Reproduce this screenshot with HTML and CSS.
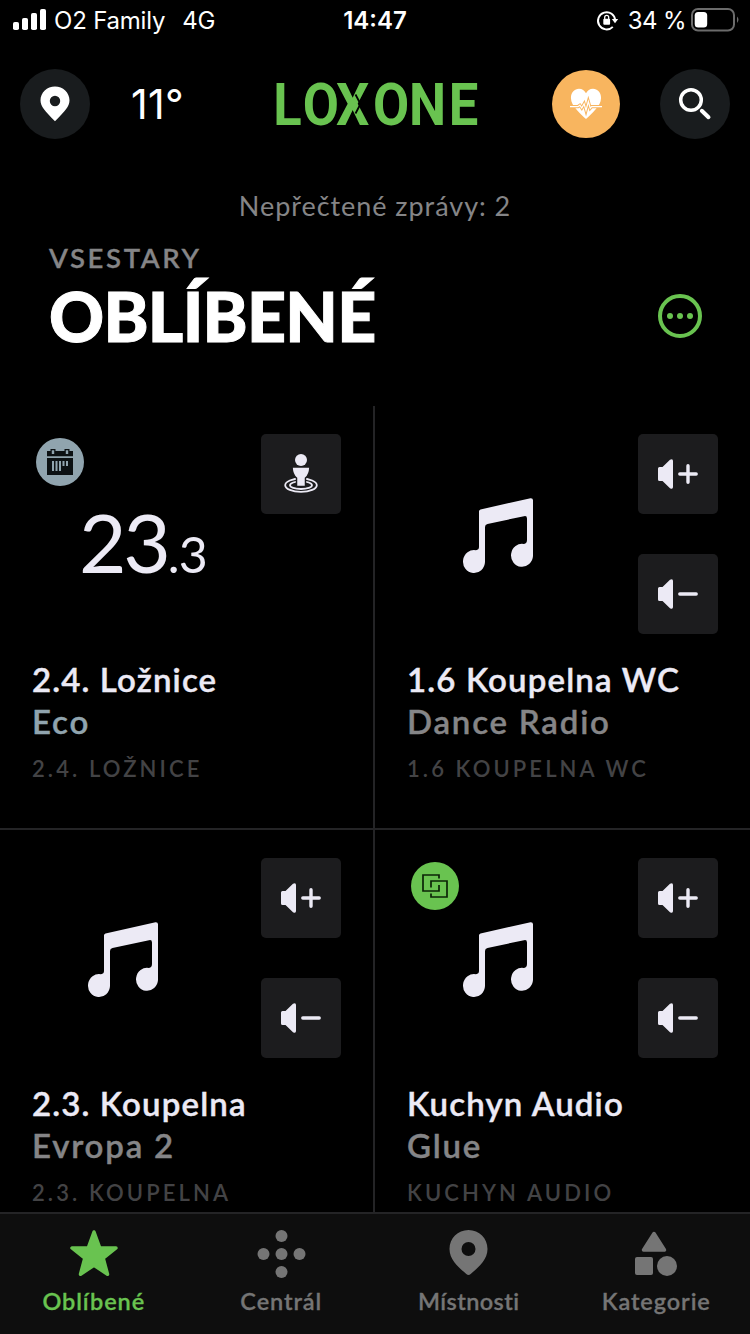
FILE: index.html
```html
<!DOCTYPE html>
<html lang="cs">
<head>
<meta charset="utf-8">
<title>Loxone</title>
<link rel="stylesheet" href="styles.css">
</head>
<body>
<svg width="0" height="0" class="defs" aria-hidden="true">
  <defs>
    <symbol id="note" viewBox="0 0 70 76">
      <path d="M16 13.5Q16 12 17.500 11.500L67.500 .200Q70 0 70 2.200V58A11 11.500 0 1 1 61 46Q64 45.500 64 42V20.500Q64 17.500 61 18.200L24.500 26Q22 26.700 22 29V64A11 11.500 0 1 1 13 52.200Q16 51.800 16 49Z" fill="#eceaf5"/>
    </symbol>
    <symbol id="vol-up" viewBox="0 0 40 30">
      <path d="M0 9.500Q0 8 1.500 8H4.500L12 .700Q15 -.800 15 2V28Q15 30.800 12 29.300L4.500 22H1.500Q0 22 0 20.500Z" fill="#eceaf5"/>
      <path d="M21.800 15H38.200M30 6.800V23.200" stroke="#eceaf5" stroke-width="3.400" stroke-linecap="round"/>
    </symbol>
    <symbol id="vol-down" viewBox="0 0 40 30">
      <path d="M0 9.500Q0 8 1.500 8H4.500L12 .700Q15 -.800 15 2V28Q15 30.800 12 29.300L4.500 22H1.500Q0 22 0 20.500Z" fill="#eceaf5"/>
      <path d="M21.800 15H38.200" stroke="#eceaf5" stroke-width="3.400" stroke-linecap="round"/>
    </symbol>
  </defs>
</svg>
<div class="screen">
  <div class="status">
    <div class="status-left">
      <svg class="signal" width="34" height="22" viewBox="0 0 34 22" fill="#fff"><rect x="0" y="13" width="6" height="8" rx="1.800"/><rect x="9" y="9" width="6" height="12" rx="1.800"/><rect x="18" y="4" width="6" height="17" rx="1.800"/><rect x="27" y="0" width="6" height="21" rx="1.800"/></svg>
      <span class="carrier">O2 Family</span>
      <span class="network">4G</span>
    </div>
    <span class="clock">14:47</span>
    <div class="status-right">
      <svg width="22" height="22" viewBox="0 0 22 22"><path d="M15.800 17.300A8.600 8.600 0 1 1 18.200 11" transform="translate(0 -.5)" fill="none" stroke="#fff" stroke-width="1.900"/><path d="M14.800 9H21.200L18 13.200Z" fill="#fff"/><rect x="6.300" y="8.700" width="6.800" height="6" rx="1" fill="#fff"/><path d="M7.700 9V7.400a2 2 0 0 1 4 0V9" fill="none" stroke="#fff" stroke-width="1.300"/></svg>
      <span class="percent">34 %</span>
      <svg class="battery" width="48" height="24" viewBox="0 0 48 24"><rect x="1" y="1" width="42" height="21.500" rx="6" fill="none" stroke="#6b6b6b" stroke-width="2"/><rect x="3.700" y="4" width="12.500" height="15.500" rx="3.500" fill="#fff"/><path d="M46 8.500Q49 11.700 46 15Z" fill="#6b6b6b"/></svg>
    </div>
  </div>

  <header class="topbar">
    <div class="round"><svg width="30" height="36" viewBox="0 0 30 36"><path fill-rule="evenodd" d="M15 .500C23 .500 29.500 6.600 29.500 14.300C29.500 20.500 25 25.300 15 35.300C5 25.300 .500 20.500 .500 14.300C.500 6.600 7 .500 15 .500ZM15 9.800a5.200 5.200 0 1 0 0 10.400a5.200 5.200 0 1 0 0 -10.400Z" fill="#fff"/></svg></div>
    <span class="temp">11°</span>
    <svg class="logo" width="202" height="48" viewBox="0 0 202 48">
      <text transform="scale(.89 1)" y="45" x="-3 30 67.500 109 149.500 194" class="wordmark">LOXONE</text>
      <path d="M79.500 14.500L84.500 24L79.500 33.500" fill="none" stroke="#000" stroke-width="1.800"/>
    </svg>
    <div class="health"><svg width="32" height="32" viewBox="0 0 34 34"><path d="M17 33C12 27.500 1 19.500 1 10.500C1 4.500 5 .800 9.500 .800C13 .800 15.500 2.800 17 5.500C18.500 2.800 21 .800 24.500 .800C29 .800 33 4.500 33 10.500C33 19.500 22 27.500 17 33Z" fill="#fff"/><path d="M0 19.800H8.500L10.500 18.300L12.500 21.300L15 16.800L17 23.800L19.500 14.500L21.500 21.500L23 19.800H34" fill="none" stroke="#f8b55f" stroke-width="3.400"/><path d="M0 19.800H8.500L10.500 18.300L12.500 21.300L15 16.800L17 23.800L19.500 14.500L21.500 21.500L23 19.800H34" fill="none" stroke="#fff" stroke-width="1.300"/></svg></div>
    <div class="round"><svg width="34" height="34" viewBox="0 0 34 34" fill="none" stroke="#fff" stroke-linecap="round"><circle cx="13" cy="13" r="10.300" stroke-width="3.500"/><path d="M23.800 23.800L30.500 30.200" stroke-width="4"/></svg></div>
  </header>

  <p class="unread">Nepřečtené zprávy: 2</p>

  <section class="heading">
    <div>
      <p class="place">VSESTARY</p>
      <h1 class="title">OBLÍBENÉ</h1>
    </div>
    <svg class="more" width="44" height="44" viewBox="0 0 44 44"><circle cx="22" cy="22" r="20" fill="none" stroke="#69c350" stroke-width="4"/><g fill="#69c350"><circle cx="12" cy="22" r="3"/><circle cx="22" cy="22" r="3"/><circle cx="32" cy="22" r="3"/></g></svg>
  </section>

  <main class="grid">
    <article class="tile">
      <div class="tile-top">
        <div class="state">
          <div class="badge eco"><svg width="28" height="28" viewBox="0 0 28 28"><path d="M1 3H4.500V1H9.500V3H18.500V1H23.500V3H27V8.300H1ZM1 10H27V27H1Z" fill="#0c1113"/><path d="M5.800 2.300H8.200V6H5.800ZM19.800 2.300H22.200V6H19.800Z" fill="#90a4ae"/><path d="M7 13V23M10.500 13V23M14 13V23M17.500 13V18M21 13V18" stroke="#90a4ae" stroke-width="2"/></svg></div>
          <div class="reading">23<span class="fraction">.3</span></div>
        </div>
        <div class="actions">
          <div class="button"><svg width="34" height="40" viewBox="0 0 34 40"><g fill="none" stroke="#eceaf5" stroke-width="1.800"><ellipse cx="17" cy="31.200" rx="15.800" ry="6.700"/><ellipse cx="17" cy="31.200" rx="11" ry="3.800"/></g><path d="M8 13H26Q25.500 21 21.500 24V32.500H12.500V24Q8.500 21 8 13Z" fill="#eceaf5" stroke="#1c1c1e" stroke-width="1.500"/><circle cx="17" cy="6" r="6" fill="#eceaf5"/></svg></div>
        </div>
      </div>
      <h2 class="name">2.4. Ložnice</h2>
      <p class="mode eco-text">Eco</p>
      <p class="room">2.4. LOŽNICE</p>
    </article>

    <article class="tile">
      <div class="tile-top">
        <div class="state"><svg class="note" width="70" height="76"><use href="#note"/></svg></div>
        <div class="actions">
          <div class="button"><svg width="40" height="30"><use href="#vol-up"/></svg></div>
          <div class="button"><svg width="40" height="30"><use href="#vol-down"/></svg></div>
        </div>
      </div>
      <h2 class="name">1.6 Koupelna WC</h2>
      <p class="mode">Dance Radio</p>
      <p class="room">1.6 KOUPELNA WC</p>
    </article>

    <article class="tile">
      <div class="tile-top">
        <div class="state"><svg class="note" width="70" height="76"><use href="#note"/></svg></div>
        <div class="actions">
          <div class="button"><svg width="40" height="30"><use href="#vol-up"/></svg></div>
          <div class="button"><svg width="40" height="30"><use href="#vol-down"/></svg></div>
        </div>
      </div>
      <h2 class="name">2.3. Koupelna</h2>
      <p class="mode">Evropa 2</p>
      <p class="room">2.3. KOUPELNA</p>
    </article>

    <article class="tile">
      <div class="tile-top">
        <div class="state">
          <div class="badge linked"><svg width="26" height="24" viewBox="0 0 26 24" fill="none" stroke="#0b2406" stroke-width="1.700"><path d="M17 4.500V1H1V17H17V11"/><path d="M9 13.500V7H25V23H9V19.500"/></svg></div>
          <svg class="note" width="70" height="76"><use href="#note"/></svg>
        </div>
        <div class="actions">
          <div class="button"><svg width="40" height="30"><use href="#vol-up"/></svg></div>
          <div class="button"><svg width="40" height="30"><use href="#vol-down"/></svg></div>
        </div>
      </div>
      <h2 class="name">Kuchyn Audio</h2>
      <p class="mode">Glue</p>
      <p class="room">KUCHYN AUDIO</p>
    </article>
  </main>

  <nav class="tabs">
    <div class="tab active"><svg width="48" height="48" viewBox="0 0 48 48"><path d="M24 2L29.800 18H46L33.200 28.200L37.500 44.200L24 35.200L10.500 44.200L14.800 28.200L2 18H18.200Z" fill="currentColor" stroke="currentColor" stroke-width="3.500" stroke-linejoin="round"/></svg><span>Oblíbené</span></div>
    <div class="tab"><svg width="48" height="48" viewBox="0 0 48 48" fill="currentColor"><circle cx="24.500" cy="6" r="6"/><circle cx="6.500" cy="24" r="6"/><circle cx="24.500" cy="24" r="6"/><circle cx="42.500" cy="24" r="6"/><circle cx="24.500" cy="42" r="6"/></svg><span>Centrál</span></div>
    <div class="tab tight"><svg width="48" height="48" viewBox="0 0 48 48"><path fill-rule="evenodd" d="M23.500 0C34.300 0 42.500 8.300 42.500 19C42.500 30 33 37.500 25.700 44Q23.500 46 21.300 44C14 37.500 4.500 30 4.500 19C4.500 8.300 12.700 0 23.500 0ZM23.500 12a7 7 0 1 0 0 14a7 7 0 1 0 0 -14Z" fill="currentColor"/></svg><span>Místnosti</span></div>
    <div class="tab"><svg width="48" height="48" viewBox="0 0 48 48" fill="currentColor"><path d="M22 3.500L32.500 20H11.500Z" stroke="currentColor" stroke-width="3.500" stroke-linejoin="round"/><rect x="3" y="27" width="18" height="18" rx="2"/><circle cx="35" cy="36" r="10"/></svg><span>Kategorie</span></div>
  </nav>
</div>
</body>
</html>
```
FILE: styles.css
```css
* { box-sizing: border-box; margin: 0; padding: 0; }
body { background: #000; color: #fff; font-family: Lato, "Open Sans", sans-serif; overflow: hidden; }
svg { display: block; flex: none; overflow: visible; }
.defs { position: absolute; }
.screen { width: 750px; height: 1334px; display: flex; flex-direction: column; }

.status { height: 42px; display: grid; grid-template-columns: 1fr auto 1fr; align-items: center; padding: 0 11px 0 13px; font: 400 24px/42px Inter, sans-serif; }
.signal { margin-bottom: 2px; }
.battery { margin-bottom: 3px; }
.status-left { display: flex; align-items: center; letter-spacing: -.2px; }
.carrier { margin-left: 7px; }
.network { margin-left: 17px; }
.clock { font-weight: 600; margin-left: -2px; }
.status-right { display: flex; align-items: center; justify-content: flex-end; }
.percent { margin: 0 5px 0 9px; letter-spacing: -.6px; }

.topbar { height: 70px; margin-top: 27px; padding: 0 20px; display: flex; align-items: center; }
.round { width: 70px; height: 70px; border-radius: 50%; background: #191c1e; display: grid; place-items: center; }
.temp { width: 186px; padding-left: 41px; font: 400 41px/70px Inter, sans-serif; letter-spacing: .3px; }
.wordmark { font: 700 59px Roboto, sans-serif; fill: #69c350; }
.health { width: 68px; height: 68px; margin: 0 40px 0 74px; border-radius: 50%; background: #f8b55f; display: grid; place-items: center; }

.unread { margin-top: 49px; line-height: 36px; text-align: center; font-size: 27px; letter-spacing: .95px; color: #858587; }

.heading { height: 182px; padding: 16px 48px 0 49px; display: flex; justify-content: space-between; }
.place { font-size: 27.500px; line-height: 36px; font-weight: 600; letter-spacing: 2.600px; color: #858587; -webkit-text-stroke: .3px; }
.title { font-size: 68px; line-height: 80px; font-weight: 900; letter-spacing: -.7px; -webkit-text-stroke: 1px #fff; }
.more { margin-top: 54px; }

.grid { flex: 1; min-height: 0; overflow: hidden; display: grid; grid-template-columns: 375px 375px; grid-auto-rows: 424px; }
.tile { padding: 28px 32px 0; border-bottom: 2px solid #242426; }
.tile:nth-child(odd) { border-right: 2px solid #242426; }
.tile-top { height: 224px; display: flex; justify-content: space-between; }
.state { position: relative; flex: 1; }
.badge { position: absolute; left: 4px; top: 4px; width: 48px; height: 48px; border-radius: 50%; display: grid; place-items: center; }
.eco { background: #90a4ae; }
.linked { background: #69c350; }
.note { margin: 64px 0 0 56px; }
.reading { margin: 57px 0 0 47px; font-size: 82px; line-height: 100px; letter-spacing: -3.200px; color: #eceaf5; white-space: nowrap; }
.fraction { font-size: 50px; letter-spacing: -.8px; }
.actions { display: flex; flex-direction: column; gap: 40px; }
.button { width: 80px; height: 80px; border-radius: 5px; background: #1c1c1e; display: grid; place-items: center; }
.name, .mode { font-size: 33px; line-height: 42px; font-weight: 600; letter-spacing: 1.150px; color: #eceaf5; white-space: nowrap; -webkit-text-stroke: .4px; }
.mode { color: #858587; letter-spacing: 1.800px; }
.eco-text { color: #90a4ae; }
.room { margin-top: 12px; font-size: 22px; line-height: 30px; font-weight: 600; letter-spacing: 3.100px; color: #434345; }

.tabs { height: 122px; border-top: 2px solid #242426; background: #0e0e0e; display: grid; grid-template-columns: repeat(4, 1fr); }
.tab { padding-top: 16px; display: flex; flex-direction: column; align-items: center; font-size: 23.500px; line-height: 30px; font-weight: 600; letter-spacing: .9px; color: #757575; gap: 8px; }
.tab span { -webkit-text-stroke: .3px; }
.tight { letter-spacing: .4px; }
.active { color: #69c350; }
```
